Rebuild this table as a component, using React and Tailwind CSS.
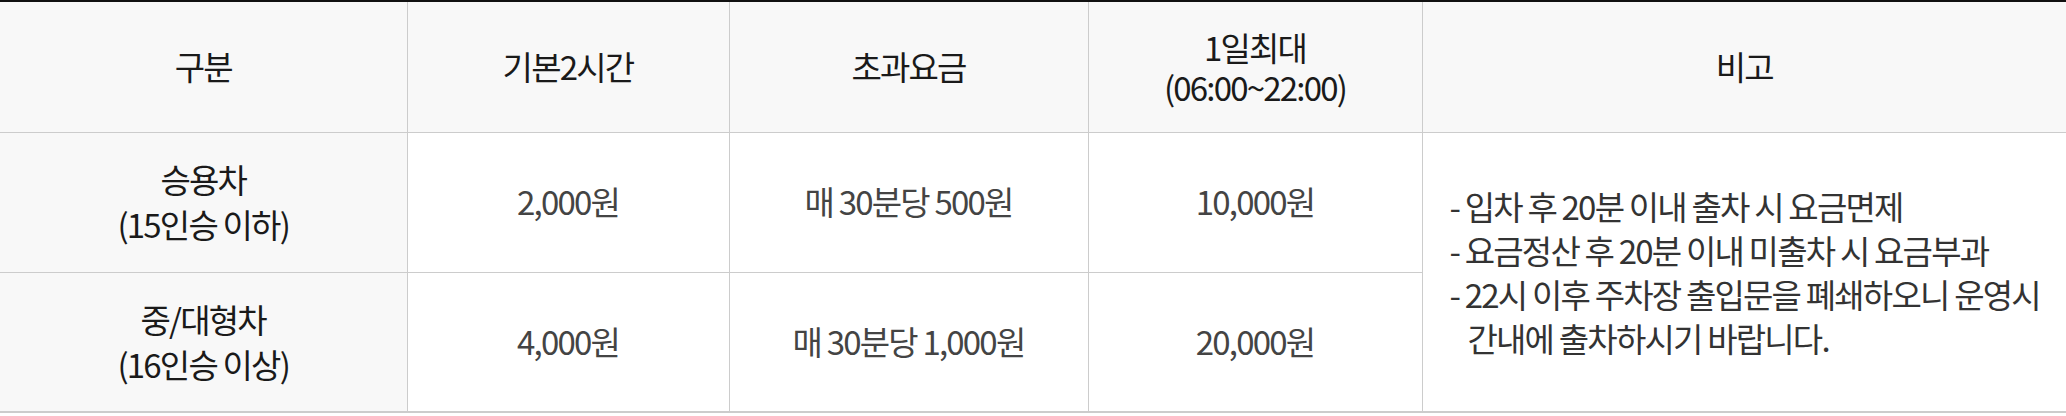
import React from "react";

const rows = [
  {
    type: ["승용차", "(15인승 이하)"],
    base: "2,000원",
    extra: "매 30분당 500원",
    max: "10,000원",
  },
  {
    type: ["중/대형차", "(16인승 이상)"],
    base: "4,000원",
    extra: "매 30분당 1,000원",
    max: "20,000원",
  },
];

export default function App() {
  return (
    <div
      className="w-[2066px] h-[416px] bg-white text-[33px] tracking-[-1.8px]"
      style={{ fontFamily: '"Noto Sans CJK KR", "Noto Sans", sans-serif' }}
    >
      <table className="w-[2066px] table-fixed border-collapse border-t-2 border-t-[#111] border-b-2 border-b-[#cccccc]">
        <colgroup>
          <col className="w-[407px]" />
          <col className="w-[322px]" />
          <col className="w-[359px]" />
          <col className="w-[334px]" />
          <col />
        </colgroup>

        {/* HEADER */}
        <thead>
          <tr className="h-[131px] bg-[#f8f8f8] text-[#1a1a1a]">
            <th className="font-normal border-r border-b border-[#cccccc]">구분</th>
            <th className="font-normal border-r border-b border-[#cccccc]">기본2시간</th>
            <th className="font-normal border-r border-b border-[#cccccc]">초과요금</th>
            <th className="font-normal border-r border-b border-[#cccccc] leading-[40px]">
              1일최대
              <br />
              (06:00~22:00)
            </th>
            <th className="font-normal border-b border-[#cccccc]">비고</th>
          </tr>
        </thead>

        {/* BODY */}
        <tbody>
          {rows.map((r, idx) => (
            <tr key={idx} className="h-[140px] text-[#444]">
              <td className="bg-[#f8f8f8] text-[#1a1a1a] text-center leading-[45px] border-r border-b border-[#cccccc]">
                {r.type[0]}
                <br />
                {r.type[1]}
              </td>
              <td className="text-center border-r border-b border-[#cccccc]">{r.base}</td>
              <td className="text-center border-r border-b border-[#cccccc]">{r.extra}</td>
              <td className="text-center border-r border-b border-[#cccccc]">{r.max}</td>
              {idx === 0 && (
                <td rowSpan={2} className="pl-[27px] align-middle leading-[44px] text-[#333] whitespace-nowrap">
                  <div>- 입차 후 20분 이내 출차 시 요금면제</div>
                  <div>- 요금정산 후 20분 이내 미출차 시 요금부과</div>
                  <div className="pl-[18px] -indent-[18px]">
                    - 22시 이후 주차장 출입문을 폐쇄하오니 운영시
                    <br />
                    간내에 출차하시기 바랍니다.
                  </div>
                </td>
              )}
            </tr>
          ))}
        </tbody>
      </table>
    </div>
  );
}
